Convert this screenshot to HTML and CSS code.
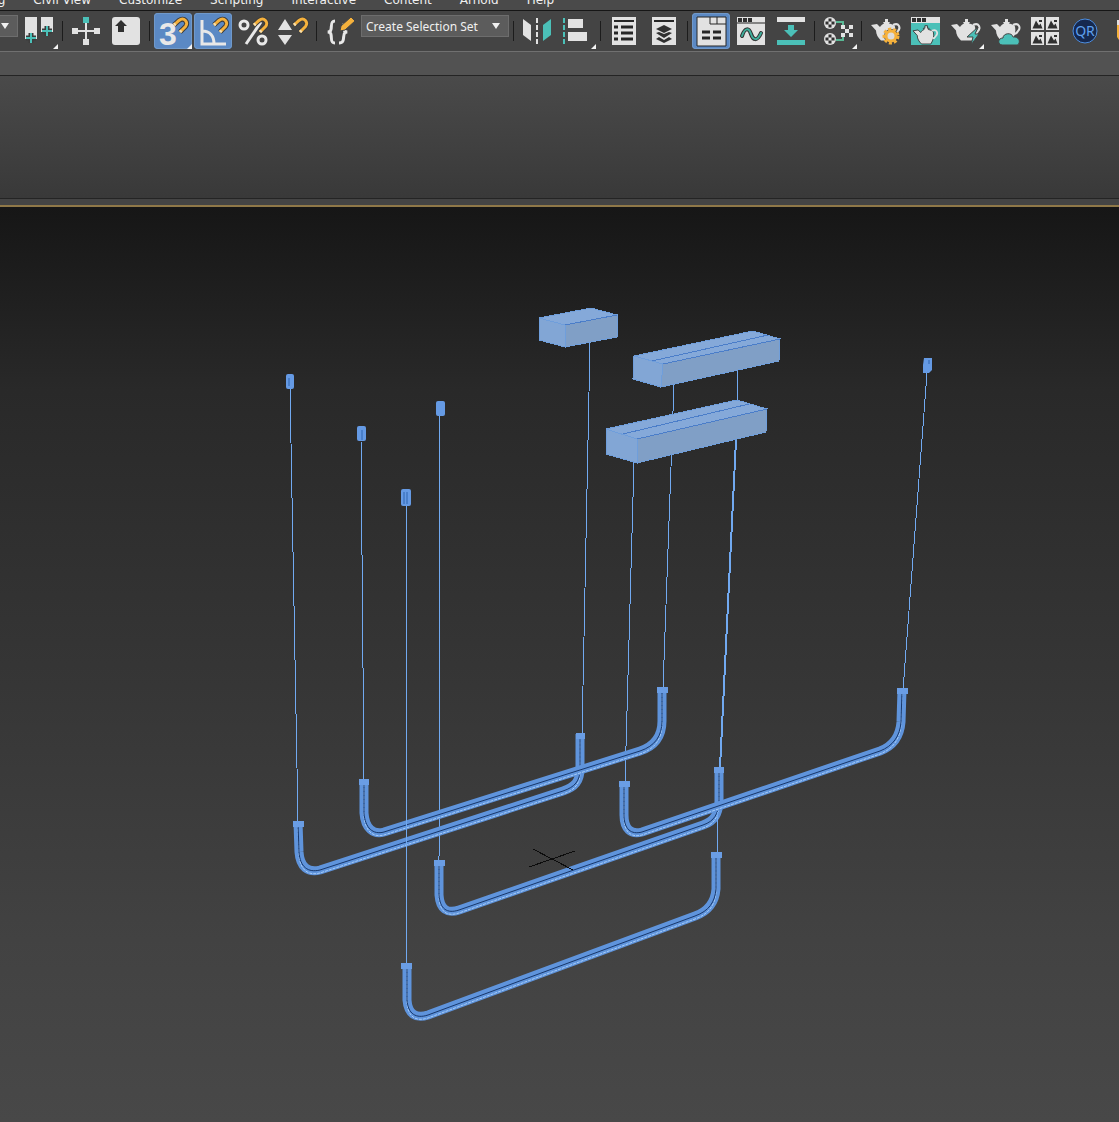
FILE: index.html
```html
<!DOCTYPE html>
<html lang="en">

<head>
    <meta charset="UTF-8">
    <meta name="viewport" content="width=device-width, initial-scale=1.0">
    <title>Perspective Viewport</title>
    <link rel="stylesheet" href="styles.css">
</head>

<body>

    <!-- shared icon parts -->
    <svg class="defs" aria-hidden="true">
        <defs>
            <g id="magnet">
                <path class="edge" d="M15 8l5-4.500c5-4 10 2 6.500 6l-5.500 5.500" />
                <path class="gold-line" d="M15 8l5-4.500c5-4 10 2 6.500 6l-5.500 5.500" />
                <path class="tips" d="M15 8l1.500-1.300M22.500 13.500L21 15" />
            </g>
            <g id="teapot">
                <path d="M0 8L6 7l3 3c1-2 3-3 4-3.500L12 5h2V2h3v3h2l-1 1.500c3 .5 5 1.500 6 3 1 5 0 9-3 14H10c-3-3-5-6-5-10z" />
                <path class="handle" d="M22 8c6-3 8 3 5 6-1 2-3 3-4 3" />
            </g>
            <g id="checker">
                <circle r="6" />
                <path class="ink" d="M-1.500-4.500h3v3h-3zM-4.500-1.500h3v3h-3zM1.500-1.500h3v3h-3zM-1.500 1.500h3v3h-3z" />
            </g>
            <g id="photo">
                <path class="light" d="M0 0h13v13H0z" />
                <path class="ink" d="M1.500 11.500l3.500-8 3 5 1.500-2 2 5zM8 3h3v2H8z" />
            </g>
        </defs>
    </svg>

    <nav class="menubar">
        <a href="#">Rendering</a>
        <a href="#">Civil View</a>
        <a href="#">Customize</a>
        <a href="#">Scripting</a>
        <a href="#">Interactive</a>
        <a href="#">Content</a>
        <a href="#">Arnold</a>
        <a href="#">Help</a>
    </nav>

    <div class="toolbar">
        <div class="combo combo-small">
            <select aria-label="Reference coordinate system"><option></option></select>
        </div>
        <button class="tool more" aria-label="Use pivot point center">
            <svg viewBox="0 0 28 28">
                <path class="light" d="M0 0h12v22H0zM16 0h12v15H16z" />
                <path class="edge" d="M6 16v10M1 21h10M22 9v10M17 14h10" />
                <path class="teal-line" d="M6 16v10M1 21h10M22 9v10M17 14h10" />
            </svg>
        </button>
        <span class="sep"></span>
        <button class="tool" aria-label="Select and manipulate">
            <svg viewBox="0 0 28 28">
                <path class="light-line" d="M14 5v18M4 14h20" />
                <path class="light" d="M0 11h6v6H0zM22 11h6v6h-6zM11 22h6v6h-6z" />
                <path class="teal" d="M11 0h6v6h-6z" />
            </svg>
        </button>
        <button class="tool" aria-label="Keyboard shortcut override">
            <svg viewBox="0 0 28 28">
                <rect class="light" width="28" height="28" rx="3" />
                <path class="ink" d="M9 3l6 6h-3v6H6V9H3z" />
            </svg>
        </button>
        <span class="sep"></span>
        <button class="tool more active" aria-label="Snaps toggle">
            <svg viewBox="0 0 28 28">
                <text class="three" x="0" y="28">3</text>
                <use href="#magnet" />
            </svg>
        </button>
        <button class="tool active" aria-label="Angle snap toggle">
            <svg viewBox="0 0 28 28">
                <path class="angle" d="M3 3v24h24M3 14c8 0 12 5 12 13" />
                <use href="#magnet" />
            </svg>
        </button>
        <button class="tool" aria-label="Percent snap toggle">
            <svg viewBox="0 0 28 28">
                <path class="angle" d="M7 27L22 5" />
                <circle class="ring" cx="5" cy="8" r="4" />
                <circle class="ring" cx="23" cy="23" r="4" />
                <use href="#magnet" />
            </svg>
        </button>
        <button class="tool" aria-label="Spinner snap toggle">
            <svg viewBox="0 0 28 28">
                <path class="light" d="M6 2l7 11H-1zM6 28l7-10H-1z" />
                <use href="#magnet" />
            </svg>
        </button>
        <span class="sep"></span>
        <button class="tool" aria-label="Edit named selection sets">
            <svg viewBox="0 0 28 28">
                <path class="brace" d="M9 4C3 4 7 12 4 14.500l-2 .5 2 .5C7 18 3 26 9 26M13 26c7 0 3-8 6-10.500l2-.5-2-.5c-2-2-1-5-1-8" />
                <path class="gold pencil" d="M14 14l1-5L25 0l4 4-10 9z" />
            </svg>
        </button>
        <div class="combo">
            <select aria-label="Named selection sets"><option>Create Selection Set</option></select>
        </div>
        <span class="sep"></span>
        <button class="tool" aria-label="Mirror">
            <svg viewBox="0 0 28 28">
                <path class="light" d="M0 2l8 6v16l-8-6z" />
                <path class="teal" d="M28 2l-8 6v16l8-6z" />
                <path class="light-line dashed" d="M14 1v26" />
            </svg>
        </button>
        <button class="tool more" aria-label="Align">
            <svg viewBox="0 0 28 28">
                <path class="teal-line dashed" d="M1 1v26" />
                <path class="light" d="M5 2h15v9H5zM5 15h19v9H5z" />
            </svg>
        </button>
        <span class="sep"></span>
        <button class="tool" aria-label="Scene explorer">
            <svg viewBox="0 0 28 28">
                <path class="light" d="M2 0h24v28H2z" />
                <path class="ink-line" d="M4 4h20" />
                <path class="ink-line thick" d="M4 10h4M11 10h12M4 16h4M11 16h12M4 22h4M11 22h12" />
            </svg>
        </button>
        <button class="tool" aria-label="Layer explorer">
            <svg viewBox="0 0 28 28">
                <path class="light" d="M2 0h24v28H2z" />
                <path class="ink-line" d="M4 4h20" />
                <path class="ink" d="M14 8l8 4-8 4-8-4zM6 16l3-1 5 2 5-2 3 1-8 5zM6 22l3-2 5 3 5-3 3 2-8 4z" />
            </svg>
        </button>
        <span class="sep"></span>
        <button class="tool active" aria-label="Toggle ribbon">
            <svg viewBox="0 0 28 28">
                <path class="light outlined" d="M0 0h29v29H0z" />
                <path class="outline" d="M13 0v7h16M20 0v7" />
                <path class="ink-line thick" d="M5 15h8M16 15h8M5 21h8M16 21h8" />
            </svg>
        </button>
        <button class="tool" aria-label="Curve editor">
            <svg viewBox="0 0 28 28">
                <path class="light" d="M0 0h28v28H0z" />
                <path class="outline" d="M0 6h28" />
                <path class="ink" d="M1 1h4v4H1zM6 1h4v4H6zM11 1h4v4h-4z" />
                <path class="wave-edge" d="M5 19c3-9 7-8 9-2s6 8 10-1" />
                <path class="wave" d="M5 19c3-9 7-8 9-2s6 8 10-1" />
            </svg>
        </button>
        <button class="tool" aria-label="Project line">
            <svg viewBox="0 0 28 28">
                <path class="light" d="M0 0h28v5H0z" />
                <path class="teal" d="M0 23h28v5H0zM11 8h6v5h4l-7 7-7-7h4z" />
            </svg>
        </button>
        <span class="sep"></span>
        <button class="tool more" aria-label="Material editor">
            <svg viewBox="0 0 28 28">
                <path class="wire-teal" d="M12 5h7v5M12 23h7v-5" />
                <use class="light" href="#checker" x="6" y="6" />
                <use class="light" href="#checker" x="6" y="22" />
                <path class="light" d="M17 8h4v4h-4zM25 8h4v4h-4zM21 12h4v4h-4zM17 16h4v4h-4zM25 16h4v4h-4z" />
            </svg>
        </button>
        <span class="sep"></span>
        <button class="tool" aria-label="Render setup">
            <svg viewBox="0 0 28 28">
                <use class="light" href="#teapot" />
                <circle class="gear-teeth" cx="20" cy="19" r="7" />
                <circle class="gear" cx="20" cy="19" r="5" />
            </svg>
        </button>
        <button class="tool" aria-label="Rendered frame window">
            <svg viewBox="0 0 28 28">
                <path class="teal" d="M0 0h29v28H0z" />
                <path class="light" d="M0 0h29v6H0z" />
                <path class="ink" d="M1 1h4v4H1zM6 1h4v4H6zM11 1h4v4h-4z" />
                <use class="light framed" href="#teapot" transform="translate(2 7) scale(.85)" />
            </svg>
        </button>
        <button class="tool more" aria-label="Render production">
            <svg viewBox="0 0 28 28">
                <use class="light" href="#teapot" />
                <path class="teal cut" d="M27 10l-11 10h6l-2 8 8-11h-4z" />
            </svg>
        </button>
        <button class="tool" aria-label="Render in the cloud">
            <svg viewBox="0 0 28 28">
                <use class="light" href="#teapot" />
                <path class="teal cut" d="M11 28c-5-1-4-7 1-7 0-5 9-6 10-1 7-1 8 7 4 8z" />
            </svg>
        </button>
        <button class="tool" aria-label="Render gallery">
            <svg viewBox="0 0 28 28">
                <use href="#photo" />
                <use href="#photo" x="15" />
                <use href="#photo" y="15" />
                <use href="#photo" x="15" y="15" />
            </svg>
        </button>
        <button class="tool" aria-label="Quick render">
            <svg viewBox="0 0 28 28">
                <circle class="qr-disc" cx="14" cy="14" r="12" />
                <text class="qr-text" x="14" y="19">QR</text>
            </svg>
        </button>
        <button class="tool" aria-label="Open project folder">
            <svg viewBox="0 0 28 28">
                <path class="light" d="M6 3h12v5H6z" />
                <path class="gold" d="M6 8h22v15H8l-2-3z" />
            </svg>
        </button>
    </div>

    <div class="strip"></div>
    <div class="ribbon"></div>

    <main class="viewport">
        <svg class="scene" viewBox="0 207 1119 915" role="img" aria-label="Suspended tube lamps, perspective view">
            <defs>
                <path id="tube-a" d="M298 822L299 852C300 867 308 873 320 870L563 791C575 787 580 781 580 769V734" />
                <path id="tube-b" d="M364 781V813C365 828 373 835 384 832L640 751C655 746 662 736 662 721V689" />
                <path id="tube-d" d="M439 863V895C440 909 447 914 459 910L703 825C715 821 718 813 719 803V769" />
                <path id="tube-c" d="M624 783V815C624 829 631 835 642 832L880 751C893 746 900 736 901 722L902 690" />
                <path id="tube-e" d="M407 966V1000C408 1014 416 1019 428 1015L695 916C709 911 715 902 716 889V854" />
            </defs>

            <!-- suspension wires -->
            <path class="wire" d="M290 388L298 822M361 440L364 780M440 415L439 862M590 343L582 735M674 384L663 688M738 370L736 442M634 462L625 782M927 373L903 690" />
            <path class="wire double" d="M736 440L720 768" />

            <!-- tubes -->
            <use class="tube" href="#tube-a" />
            <use class="tube-light" href="#tube-a" y="3" />
            <use class="tube-core" href="#tube-a" />
            <use class="tube" href="#tube-b" />
            <use class="tube-light" href="#tube-b" y="3" />
            <use class="tube-core" href="#tube-b" />
            <use class="tube" href="#tube-d" />
            <use class="tube-light" href="#tube-d" y="3" />
            <use class="tube-core" href="#tube-d" />
            <use class="tube" href="#tube-c" />
            <use class="tube-light" href="#tube-c" y="3" />
            <use class="tube-core" href="#tube-c" />
            <use class="tube" href="#tube-e" />
            <use class="tube-light" href="#tube-e" y="3" />
            <use class="tube-core" href="#tube-e" />
            <path class="wire" d="M406 505L407 963M718 812L717 853" />

            <!-- tube collars -->
            <path class="collar" d="M293 821h11v6h-11zM359 779h10v6h-10zM576 733h9v6h-9zM657 687h11v6h-11zM619 781h11v6h-11zM897 688h11v6h-11zM714 767h10v6h-10zM434 860h11v6h-11zM401 963h11v6h-11zM711 852h11v6h-11z" />

            <!-- ceiling caps -->
            <g class="cap">
                <rect x="286" y="374" width="8" height="15" rx="2" />
                <rect x="357" y="426" width="9" height="15" rx="2" />
                <rect x="401" y="489" width="10" height="17" rx="2" />
                <rect x="436" y="401" width="9" height="15" rx="2" />
                <path d="M924 358h8v12l-3 3h-6v-8z" />
                <path class="cap-line" d="M289 378v8M362 430v10M404 492v12M407 492v12M929 360v4" />
            </g>

            <!-- ceiling boxes -->
            <g class="box">
                <path class="top" d="M539 318L591 308L617 315L565 325z" />
                <path class="left" d="M539 318L565 325V347L539 340z" />
                <path class="front" d="M565 325L617 315V337L565 347z" />
                <path class="seam" d="M565 325L617 315" />
            </g>
            <g class="box">
                <path class="top" d="M634 356L753 331L780 339L663 364z" />
                <path class="left" d="M634 356L663 364L661 387L633 379z" />
                <path class="front" d="M663 364L780 339L779 361L661 387z" />
                <path class="seam" d="M652 361L768 335M663 364L780 339" />
            </g>
            <g class="box">
                <path class="top" d="M606 429L737 400L767 409L637 439z" />
                <path class="left" d="M606 429L637 439V463L606 454z" />
                <path class="front" d="M637 439L767 409L766 432L637 463z" />
                <path class="seam" d="M623 434L749 404M637 439L767 409" />
            </g>

            <path class="origin" d="M533 849L573 870M529 867L575 851" />
        </svg>
    </main>

</body>

</html>
```

FILE: styles.css
```css
* {
    box-sizing: border-box;
}

body {
    margin: 0;
    height: 100vh;
    display: flex;
    flex-direction: column;
    overflow: hidden;
    font-family: "DejaVu Sans", sans-serif;
    font-size: 12px;
    background-color: #444;
    color: #eee;
}

.defs {
    position: absolute;
    width: 0;
    height: 0;
}

/* menu bar */
.menubar {
    display: flex;
    flex: none;
    align-items: flex-end;
    gap: 28px;
    height: 11px;
    padding-bottom: 2px;
    margin-left: -56px;
    overflow: hidden;
    background-color: #4a4a4a;
    border-bottom: 1px solid #161616;
}

.menubar a {
    flex: none;
    color: #f0f0f0;
    line-height: 16px;
    text-decoration: none;
}

/* toolbar */
.toolbar {
    display: flex;
    flex: none;
    gap: 2px;
    height: 41px;
    padding-top: 2px;
    overflow: hidden;
    background-color: #444;
    border-bottom: 1px solid #707070;
}

.tool {
    position: relative;
    flex: none;
    display: flex;
    align-items: center;
    justify-content: center;
    width: 38px;
    height: 36px;
    padding: 0;
    border: none;
    border-radius: 4px;
    background: none;
}

.tool svg {
    width: 28px;
    height: 28px;
    overflow: visible;
}

.tool.active {
    background-color: #5b89c4;
    box-shadow: inset 0 0 0 1px #7099ca;
}

.tool.more::after {
    content: "";
    position: absolute;
    right: 0;
    bottom: 0;
    border-left: 5px solid transparent;
    border-bottom: 5px solid #f4f4f4;
}

.sep {
    flex: none;
    width: 1px;
    height: 20px;
    margin: 8px 2px;
    background-color: #1c1c1c;
}

.combo {
    position: relative;
    flex: none;
    width: 148px;
    height: 22px;
    margin-top: 2px;
}

.combo-small {
    width: 60px;
    margin-left: -42px;
}

.combo select {
    appearance: none;
    display: block;
    width: 100%;
    height: 100%;
    padding: 0 4px;
    border: 1px solid #6d6d6d;
    border-radius: 0;
    background-color: #5c5c5c;
    color: #f0f0f0;
    font-family: "Noto Sans", sans-serif;
    font-size: 12px;
}

.combo::after {
    content: "";
    position: absolute;
    right: 9px;
    top: 8px;
    border: 4px solid transparent;
    border-top: 6px solid #f0f0f0;
    border-bottom: none;
    pointer-events: none;
}

/* icon paint */
.light { fill: #e2e2e2; }
.teal { fill: #4bc0b8; }
.gold { fill: #f5b13c; }
.ink { fill: #303030; }
.edge, .gold-line, .teal-line, .light-line, .ink-line, .tips, .angle, .ring,
.brace, .outline, .wave, .wave-edge, .wire-teal, .handle { fill: none; }
.edge { stroke: #3c3c3c; stroke-width: 5; }
.gold-line { stroke: #f5b13c; stroke-width: 3; }
.tips { stroke: #f7dfae; stroke-width: 3; }
.teal-line { stroke: #4bc0b8; stroke-width: 2; }
.light-line { stroke: #e2e2e2; stroke-width: 2; }
.ink-line { stroke: #262626; stroke-width: 2; }
.thick { stroke-width: 3; }
.dashed { stroke-dasharray: 5 2; }
.angle { stroke: #e8e8e8; stroke-width: 3; }
.ring { stroke: #e8e8e8; stroke-width: 3; }
.brace { stroke: #e8e8e8; stroke-width: 3; }
.pencil { stroke: #444; }
.outline { stroke: #262626; }
.outlined { stroke: #262626; }
.wave-edge { stroke: #303030; stroke-width: 4; stroke-linecap: round; }
.wave { stroke: #3fae9c; stroke-width: 2; stroke-linecap: round; }
.wire-teal { stroke: #58b894; stroke-width: 2; }
.handle { stroke: #e2e2e2; stroke-width: 2; }
.framed { stroke: #303030; }
.cut { stroke: #444; }
.gear { fill: #dcdcdc; stroke: #f5b13c; stroke-width: 3; }
.gear-teeth { fill: #444; stroke: #f5b13c; stroke-width: 3; stroke-dasharray: 3 2; }
.qr-disc { fill: #16294f; stroke: #4d8ee0; stroke-width: 1; }

.three {
    fill: #e8e8e8;
    font-family: "Liberation Sans", sans-serif;
    font-size: 32px;
    font-weight: 700;
}

.qr-text {
    fill: #5fa0ee;
    font-family: "Noto Sans", sans-serif;
    font-size: 14px;
    text-anchor: middle;
}

/* empty ribbon area */
.strip {
    flex: none;
    height: 24px;
    background-color: #525252;
    border-bottom: 1px solid #242424;
}

.ribbon {
    flex: none;
    height: 123px;
    background: linear-gradient(#4a4a4a, #393939);
    border-bottom: 1px solid #242424;
}

/* viewport */
.viewport {
    flex: 1;
    min-height: 0;
    margin-top: 6px;
    border-top: 2px solid #8f7848;
    background: linear-gradient(#161616, #292929 20%, #353535 50%, #424242 80%, #484848);
}

.scene {
    display: block;
    width: 100%;
    height: 100%;
}

.wire {
    fill: none;
    stroke: #71a9f0;
    stroke-width: 1;
    shape-rendering: crispEdges;
}

.double {
    stroke-width: 2;
}

.tube, .tube-light, .tube-core {
    fill: none;
    stroke-linejoin: round;
}

.tube {
    stroke: #5f94dc;
    stroke-width: 9;
}

.tube-light {
    stroke: #a6ccf8;
    stroke-width: 1;
    stroke-dasharray: 3 1;
}

.tube-core {
    stroke: #17376b;
    stroke-width: 1;
}

.collar {
    fill: #6a9de4;
}

.cap {
    fill: #659ae4;
}

.cap-line {
    fill: none;
    stroke: #2f64b0;
}

.box .top { fill: #85a9d9; }
.box .left { fill: #82a6d5; }
.box .front { fill: #809fc6; }

.box path {
    stroke: #6f9edb;
    stroke-width: 1;
    shape-rendering: crispEdges;
}

.box .seam {
    fill: none;
    stroke: #4a7dc9;
}

.origin {
    fill: none;
    stroke: #0c0c0c;
    shape-rendering: crispEdges;
}
```
